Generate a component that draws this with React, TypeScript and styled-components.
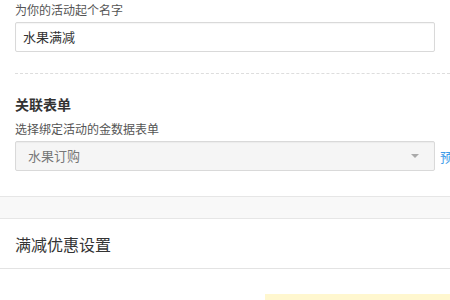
import styled, { createGlobalStyle } from "styled-components";

const GlobalStyle = createGlobalStyle`
  html, body {
    margin: 0;
    padding: 0;
    background: #fff;
    overflow: hidden;
  }
  body {
    font-family: "Noto Sans CJK SC", "Noto Sans", "Liberation Sans", sans-serif;
    color: #333;
  }
`;

const Page = styled.div`
  width: 450px;
  overflow: hidden;
`;

const Block = styled.div`
  padding-left: 15px;
`;

const Label = styled.div`
  font-size: 12px;
  line-height: 20px;
  color: #555;
  white-space: nowrap;
`;

const FieldRow = styled.div`
  display: flex;
  align-items: center;
  margin-top: 2px;
  width: 600px;
`;

const TextInput = styled.div`
  box-sizing: border-box;
  width: 420px;
  height: 30px;
  flex: none;
  border: 1px solid #d9d9d9;
  border-radius: 2px;
  padding: 0 7px;
  font-size: 13px;
  line-height: 28px;
  color: #333;
  box-shadow: inset 0 1px 1px rgba(0, 0, 0, 0.04);
`;

const Select = styled(TextInput)`
  display: flex;
  align-items: center;
  justify-content: space-between;
  padding: 0 15px 0 12px;
  background: #f5f5f5;
  color: #777;
`;

const Caret = styled.span`
  width: 0;
  height: 0;
  border-left: 4px solid transparent;
  border-right: 4px solid transparent;
  border-top: 4px solid #aaa;
`;

const Link = styled.span`
  margin-left: 5px;
  font-size: 13px;
  color: #3d9be9;
  white-space: nowrap;
`;

const Dashed = styled.div`
  margin: 21px 0 0 15px;
  border-top: 1px dashed #ddd;
`;

const Heading = styled.div`
  margin-top: 19px;
  font-size: 14px;
  line-height: 22px;
  font-weight: 700;
  color: #333;
`;

const SubLabel = styled(Label)`
  margin-top: 4px;
`;

const Band = styled.div`
  margin-top: 25px;
  height: 21px;
  background: #f8f8f8;
  border-top: 1px solid #e6e6e6;
  border-bottom: 1px solid #e6e6e6;
`;

const SectionHeader = styled.div`
  height: 49px;
  display: flex;
  align-items: center;
  padding-left: 15px;
  font-size: 16px;
  color: #333;
  border-bottom: 1px solid #e3e3e3;
`;

const Notice = styled.div`
  margin: 25px 0 0 265px;
  height: 20px;
  background: #fff7cf;
`;

export default function App() {
  return (
    <Page>
      <GlobalStyle />
      <Block>
        <Label>为你的活动起个名字</Label>
        <FieldRow>
          <TextInput>水果满减</TextInput>
        </FieldRow>
      </Block>
      <Dashed />
      <Block>
        <Heading>关联表单</Heading>
        <SubLabel>选择绑定活动的金数据表单</SubLabel>
        <FieldRow>
          <Select>
            <span>水果订购</span>
            <Caret />
          </Select>
          <Link>预览</Link>
        </FieldRow>
      </Block>
      <Band />
      <SectionHeader>满减优惠设置</SectionHeader>
      <Notice />
    </Page>
  );
}
